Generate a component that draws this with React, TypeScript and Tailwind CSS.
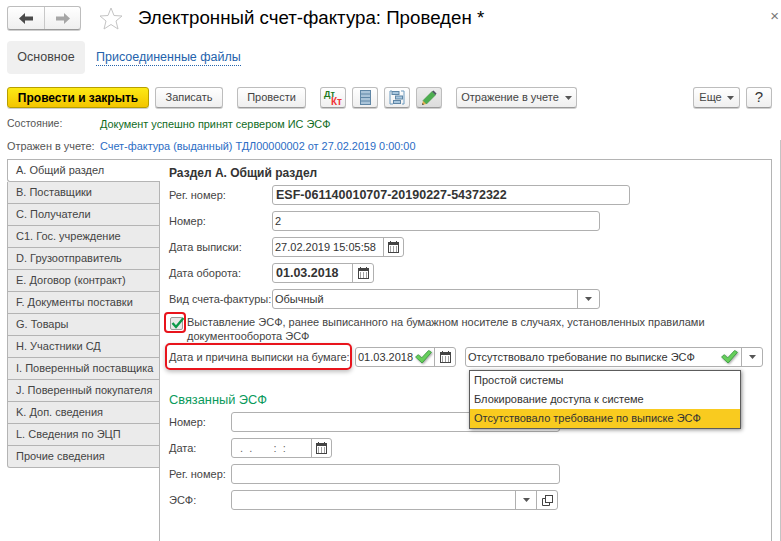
import type { ReactNode } from "react";

const tabs = [
  "A. Общий раздел",
  "B. Поставщики",
  "C. Получатели",
  "C1. Гос. учреждение",
  "D. Грузоотправитель",
  "E. Договор (контракт)",
  "F. Документы поставки",
  "G. Товары",
  "H. Участники СД",
  "I. Поверенный поставщика",
  "J. Поверенный покупателя",
  "K. Доп. сведения",
  "L. Сведения по ЭЦП",
  "Прочие сведения",
];

function Caret() {
  return (
    <svg width="7" height="4" viewBox="0 0 7 4" className="shrink-0">
      <polygon points="0,0 7,0 3.5,4" fill="#555" />
    </svg>
  );
}

function CalendarIcon() {
  return (
    <svg width="11" height="12" viewBox="0 0 11 12">
      <path d="M2.5 0v2M8.5 0v2" stroke="#444" strokeWidth="1" />
      <rect x="0.5" y="1.5" width="10" height="10" fill="#fff" stroke="#444" />
      <rect x="0.5" y="1.5" width="10" height="2.5" fill="#444" />
      <path d="M2 6h1M5 6h1M8 6h1M2 8h1M5 8h1M8 8h1M2 10h1M5 10h1M8 10h1" stroke="#444" strokeWidth="1" />
    </svg>
  );
}

function GreenCheck() {
  return (
    <svg width="17" height="14" viewBox="0 0 18 15" className="shrink-0 drop-shadow-[1px_1px_1px_rgba(0,0,0,0.35)]">
      <polygon points="0.5,7.5 3.5,5 7,8.5 14.5,0.5 17.5,2.5 7.5,14 " fill="#67cf5b" stroke="#3f9e46" strokeWidth="1" />
    </svg>
  );
}

function Btn({ w, children, className = "" }: { w: string; children: ReactNode; className?: string }) {
  return (
    <div className={`${w} h-[21px] shrink-0 flex items-center justify-center whitespace-nowrap rounded-[3px] border border-[#bdbdbd] border-b-[#9a9a9a] bg-gradient-to-b from-white to-[#efefef] shadow-[0_1px_0_#cfcfcf] text-[11px] text-[#444] ${className}`}>
      {children}
    </div>
  );
}

function Field({ w, className = "", children }: { w: string; className?: string; children?: ReactNode }) {
  return (
    <div className={`${w} h-5 shrink-0 flex items-center rounded-[3px] border border-[#b0b0b0] bg-white text-[11px] text-[#333] overflow-hidden ${className}`}>
      {children}
    </div>
  );
}

function Cell({ w, children }: { w: string; children: ReactNode }) {
  return <div className={`${w} h-full shrink-0 border-l border-[#b0b0b0] flex items-center justify-center`}>{children}</div>;
}

function Row({ label, w, children }: { label: string; w: string; children: ReactNode }) {
  return (
    <div className="flex items-center h-5 mb-[6px]">
      <div className={`${w} shrink-0 text-[11px] text-[#444] whitespace-nowrap`}>{label}</div>
      {children}
    </div>
  );
}

export default function App() {
  return (
    <div className="relative w-[781px] h-[541px] overflow-hidden bg-white [font-family:'Liberation_Sans',Arial,sans-serif]">
      {/* title bar */}
      <div className="flex items-center h-[24px] mt-[6px] ml-[7px]">
        <div className="flex w-[74px] h-6 rounded-[3px] border border-[#bdbdbd] border-b-[#9a9a9a] bg-gradient-to-b from-white to-[#efefef] shadow-[0_1px_0_#cfcfcf]">
          <div className="w-[37px] flex items-center justify-center border-r border-[#c8c8c8]">
            <svg width="14" height="11" viewBox="0 0 14 11">
              <path d="M0 5.5 6 0v3.5h8v4H6V11z" fill="#4a4a4a" />
            </svg>
          </div>
          <div className="flex-1 flex items-center justify-center">
            <svg width="14" height="11" viewBox="0 0 14 11">
              <path d="M14 5.5 8 0v3.5H0v4h8V11z" fill="#a6a6a6" />
            </svg>
          </div>
        </div>
        <svg width="24" height="23" viewBox="0 0 24 23" className="ml-[18px]">
          <polygon points="12,1 15,8.5 23,9 17,14 19,22 12,17.5 5,22 7,14 1,9 9,8.5" fill="#fff" stroke="#c4c4c4" strokeWidth="1" />
        </svg>
        <div className="ml-[15px] text-[18.7px] text-black whitespace-nowrap">Электронный счет-фактура: Проведен *</div>
        <div className="ml-auto mr-[2px] -mt-[6px] text-[15px] leading-none text-[#777]">×</div>
      </div>

      {/* form tabs */}
      <div className="flex items-center mt-[11px] ml-[7px]">
        <div className="w-[78px] h-[33px] flex items-center justify-center rounded-[4px] bg-[#f0f0f0] text-[12.5px] text-[#444]">Основное</div>
        <div className="ml-[11px] text-[12.5px] leading-[15px] text-[#2463ac] border-b border-dotted border-[#2463ac]">Присоединенные файлы</div>
      </div>

      {/* toolbar */}
      <div className="flex items-center mt-[13px] ml-[7px] w-[765px]">
        <Btn w="w-[142px]" className="!border-[#b79f00] !from-[#fdea14] !to-[#f3c500] font-bold !text-black !text-[12px]">Провести и закрыть</Btn>
        <Btn w="w-[68px]" className="ml-[6px]">Записать</Btn>
        <Btn w="w-[69px]" className="ml-[14px]">Провести</Btn>
        <Btn w="w-[26px]" className="ml-[14px]">
          <div className="relative w-[18px] h-[16px] font-bold text-[9px] leading-[8px]">
            <span className="absolute left-0 top-0 text-[#1c7a1c]">Дт</span>
            <span className="absolute right-0 bottom-0 text-[10px] text-[#f03535]">Кт</span>
          </div>
        </Btn>
        <Btn w="w-[26px]" className="ml-[6px]">
          <svg width="11" height="15" viewBox="0 0 11 15">
            <rect x="0.5" y="0.5" width="10" height="14" fill="#a9c3d8" stroke="#5f86a6" />
            <path d="M1 4h9M1 7.5h9M1 11h9" stroke="#5f86a6" />
          </svg>
        </Btn>
        <Btn w="w-[26px]" className="ml-[6px]">
          <svg width="16" height="15" viewBox="0 0 16 15">
            <path d="M3 1H1V14H4M12 1H15V14H13" fill="none" stroke="#6f9cc0" />
            <rect x="3" y="1.5" width="7" height="3" fill="#a9c7de" stroke="#5f86a6" />
            <rect x="6.5" y="6" width="7" height="3" fill="#a9c7de" stroke="#5f86a6" />
            <rect x="4.5" y="10.5" width="7" height="3" fill="#a9c7de" stroke="#5f86a6" />
          </svg>
        </Btn>
        <Btn w="w-[26px]" className="ml-[6px] !from-[#ececec] !to-[#dcdcdc]">
          <svg width="16" height="16" viewBox="0 0 16 16">
            <polygon points="1,15 2,10.5 5.5,14" fill="#e8b04c" />
            <polygon points="2,10.5 11,1.5 14.5,5 5.5,14" fill="#4cae4f" stroke="#3c8c40" strokeWidth="0.5" />
            <polygon points="11,1.5 12.5,0.5 15.5,3.5 14.5,5" fill="#4a5560" />
            <polygon points="1,15 1.5,13 3,14.5" fill="#444" />
          </svg>
        </Btn>
        <Btn w="w-[121px]" className="ml-[14px] gap-[6px]">Отражение в учете<Caret /></Btn>
        <Btn w="w-[47px]" className="ml-auto gap-[5px]">Еще<Caret /></Btn>
        <Btn w="w-[26px]" className="ml-[6px] !text-[15px] !text-[#333]">?</Btn>
      </div>

      {/* state lines */}
      <div className="ml-[7px] mt-[9px] h-[14px] flex items-center">
        <div className="w-[93px] text-[10.5px] text-[#555]">Состояние:</div>
        <div className="text-[10.9px] text-[#0f6b1e]">Документ успешно принят сервером ИС ЭСФ</div>
      </div>
      <div className="ml-[7px] mt-[8px] h-[14px] flex items-center text-[10.9px]">
        <div className="w-[93px] text-[#555] whitespace-nowrap">Отражен в учете:</div>
        <div className="text-[#2b6cc4] whitespace-nowrap">Счет-фактура (выданный) ТДЛ00000002 от 27.02.2019 0:00:00</div>
      </div>

      {/* body */}
      <div className="absolute right-0 top-[140px] bottom-0 w-px bg-[#c4c4c4]" />
      <div className="flex mt-[6px] ml-[7px] w-[765px] h-[382px] border-t border-r border-[#b4b4b4]">
        <div className="w-[153px] shrink-0 flex flex-col">
          {tabs.map((t, i) => (
            <div
              key={t}
              className={`h-[22px] shrink-0 pl-[8px] flex items-center whitespace-nowrap text-[11px] text-[#444] border-l border-b border-[#b4b4b4] ${
                i === 0 ? "bg-white rounded-bl-[3px]" : `bg-[#ebebeb] border-r ${i === tabs.length - 1 ? "rounded-bl-[3px]" : ""}`
              }`}
            >
              {t}
            </div>
          ))}
          <div className="flex-1 border-r border-[#b4b4b4]" />
        </div>

        <div className="relative flex-1 pl-[9px]">
          <div className="h-[25px] flex items-center text-[12px] font-bold text-[#333]">Раздел А. Общий раздел</div>
          <Row label="Рег. номер:" w="w-[103px]">
            <Field w="w-[358px]" className="pl-[3px] font-bold !text-[12.5px]">ESF-061140010707-20190227-54372322</Field>
          </Row>
          <Row label="Номер:" w="w-[103px]">
            <Field w="w-[328px]" className="pl-[2px]">2</Field>
          </Row>
          <Row label="Дата выписки:" w="w-[103px]">
            <Field w="w-[132px]" className="pl-[2px]">
              <span className="flex-1 whitespace-nowrap">27.02.2019 15:05:58</span>
              <Cell w="w-[20px]"><CalendarIcon /></Cell>
            </Field>
          </Row>
          <Row label="Дата оборота:" w="w-[103px]">
            <Field w="w-[102px]" className="pl-[3px] font-bold !text-[12.5px]">
              <span className="flex-1">01.03.2018</span>
              <Cell w="w-[21px]"><CalendarIcon /></Cell>
            </Field>
          </Row>
          <Row label="Вид счета-фактуры:" w="w-[103px]">
            <Field w="w-[328px]" className="pl-[2px]">
              <span className="flex-1">Обычный</span>
              <Cell w="w-[22px]"><Caret /></Cell>
            </Field>
          </Row>

          <div className="flex h-[28px]">
            <div className="w-[18px] shrink-0 pt-[2px] pl-px">
              <div className="relative w-[13px] h-[13px] rounded-[2px] border border-[#9c9c9c] bg-[#e9e9e9]">
                <svg width="14" height="13" viewBox="0 0 14 13" className="absolute left-0 -top-[2px]">
                  <path d="M1.5 7 5 11 12.5 2" fill="none" stroke="#0c9a4a" strokeWidth="2.4" />
                </svg>
                <div className="absolute -left-[7px] -top-[6px] w-[22px] h-[21px] rounded-[4px] border-2 border-[#e8141c]" />
              </div>
            </div>
            <div className="whitespace-nowrap text-[11px] leading-[14px] text-[#444]">
              Выставление ЭСФ, ранее выписанного на бумажном носителе в случаях, установленных правилами
              <br />
              документооборота ЭСФ
            </div>
          </div>

          <div className="relative flex items-center h-5 mt-[4px]">
            <div className="w-[186px] shrink-0 text-[11px] text-[#444] whitespace-nowrap">Дата и причина выписки на бумаге:</div>
            <div className="absolute -left-[4px] -top-[4px] w-[187px] h-[27px] rounded-[5px] border-2 border-[#e8141c] shadow-[0_2px_4px_rgba(0,0,0,0.25)]" />
            <Field w="w-[101px]" className="pl-[2px] !overflow-visible">
              <span className="flex-1">01.03.2018</span>
              <GreenCheck />
              <div className="w-[2px] shrink-0" />
              <Cell w="w-[21px]"><CalendarIcon /></Cell>
            </Field>
            <Field w="w-[298px]" className="ml-[9px] pl-[2px] !overflow-visible">
              <span className="flex-1 whitespace-nowrap">Отсутствовало требование по выписке ЭСФ</span>
              <GreenCheck />
              <div className="w-[3px] shrink-0" />
              <Cell w="w-[21px]"><Caret /></Cell>
            </Field>
          </div>

          {/* dropdown list */}
          <div className="absolute left-[309px] top-[210px] w-[272px] h-[59px] z-10 border border-[#5c5c5c] bg-white shadow-[1px_1px_4px_rgba(0,0,0,0.45)] text-[11px] text-[#333] flex flex-col">
            <div className="h-[19px] pl-[4px] flex items-center">Простой системы</div>
            <div className="h-[19px] pl-[4px] flex items-center">Блокирование доступа к системе</div>
            <div className="h-[19px] pl-[4px] flex items-center bg-[#f9cb1f]">Отсутствовало требование по выписке ЭСФ</div>
          </div>

          <div className="h-5 mt-[23px] mb-[2px] flex items-center text-[12.8px] text-[#0a9a5c]">Связанный ЭСФ</div>
          <Row label="Номер:" w="w-[62px]">
            <Field w="w-[329px]" />
          </Row>
          <Row label="Дата:" w="w-[62px]">
            <Field w="w-[101px]" className="pl-[8px]">
              <span className="flex-1 whitespace-pre text-[#666]">{".  .       :  :"}</span>
              <Cell w="w-[20px]"><CalendarIcon /></Cell>
            </Field>
          </Row>
          <Row label="Рег. номер:" w="w-[62px]">
            <Field w="w-[329px]" />
          </Row>
          <Row label="ЭСФ:" w="w-[62px]">
            <Field w="w-[327px]">
              <span className="flex-1" />
              <Cell w="w-[21px]"><Caret /></Cell>
              <Cell w="w-[21px]">
                <svg width="11" height="11" viewBox="0 0 11 11">
                  <rect x="3.5" y="0.5" width="7" height="7" fill="#fff" stroke="#444" />
                  <path d="M3.5 3.5H.5v7h7V7.5" fill="none" stroke="#444" />
                </svg>
              </Cell>
            </Field>
          </Row>
        </div>
      </div>
    </div>
  );
}
